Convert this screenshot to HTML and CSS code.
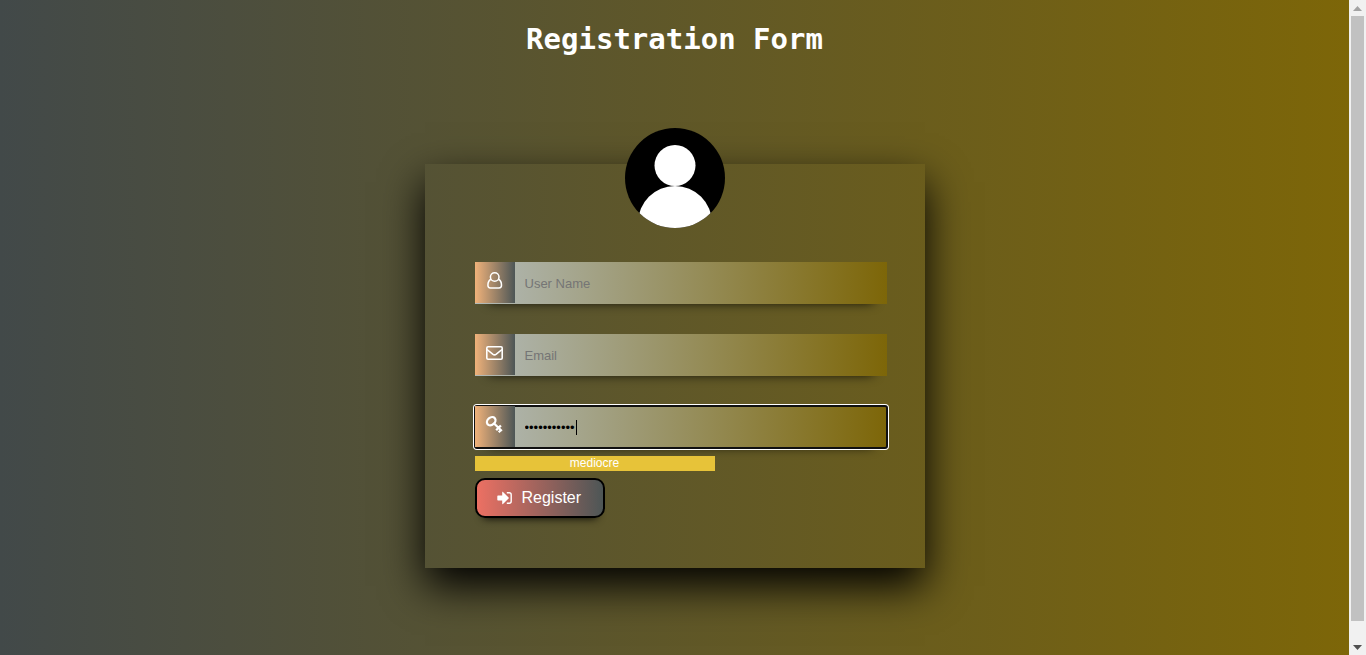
FILE: index.html
```
<!DOCTYPE html>
<html lang="en">
<head>
<meta charset="utf-8">
<title>Registration Form</title>
<link rel="stylesheet" href="styles.css">
</head>
<body>
<main class="page">
  <h1 class="title">Registration Form</h1>
  <form class="card">
    <svg class="avatar" viewBox="0 0 100 100" role="img" aria-label="Avatar">
      <defs><clipPath id="disc"><circle cx="50" cy="50" r="50"/></clipPath></defs>
      <g clip-path="url(#disc)">
        <rect width="100" height="100" fill="#000"/>
        <circle cx="50" cy="37.500" r="20.500" fill="#fff"/>
        <circle cx="50" cy="95" r="37" fill="#fff"/>
      </g>
    </svg>
    <div class="fields">
      <div class="field">
        <label class="icon" for="user" aria-label="User name">
          <svg viewBox="0 0 20 20" fill="none" stroke="#fff" stroke-width="1.500"><circle cx="9.700" cy="6" r="4.300"/><path d="M6 8.300C3.800 9.300 2.900 11.800 2.900 14.300c0 1.700 1 2.700 2.500 2.700h8.600c1.500 0 2.500-1 2.500-2.700 0-2.500-.9-5-3.100-6"/></svg>
        </label>
        <input class="input" id="user" type="text" placeholder="User Name">
      </div>
      <div class="field">
        <label class="icon" for="email" aria-label="Email">
          <svg viewBox="0 0 20 20" fill="none" stroke="#fff" stroke-width="1.600"><rect x="1.800" y="3.800" width="15.400" height="12.400" rx="1.200"/><path d="M2 6.500l5.700 4.700c1.300 1 2.300 1 3.600 0L17 6.500"/></svg>
        </label>
        <input class="input" id="email" type="email" placeholder="Email">
      </div>
      <div class="field">
        <label class="icon" for="password" aria-label="Password">
          <svg viewBox="0 0 20 20" fill="none" stroke="#fff" stroke-width="2.300"><ellipse cx="6.200" cy="6.200" rx="4.700" ry="3.600" transform="rotate(-40 6.200 6.200)"/><path d="M8.800 8.200l8 7.800M13.500 12.700l-2.300 2.500M15.900 15l-2.200 2.300M13.500 12.900l2.400-2.400"/></svg>
        </label>
        <input class="input input-active" id="password" type="password" value="mypassword1">
        <span class="caret"></span>
      </div>
    </div>
    <div class="strength">mediocre</div>
    <button class="register" type="button">
      <svg viewBox="0 0 16 14" fill="#fff"><path d="M1 4.500h4.200V1.300c0-.5.500-.6.800-.3l5.600 5.500c.3.300.3.700 0 1L6 13c-.3.300-.8.200-.8-.3V9.500H1c-.4 0-.7-.3-.7-.7V5.200c0-.4.300-.7.700-.7z"/><path d="M9.800 1.700h2.400c1.200 0 2 .8 2 2v6.600c0 1.200-.8 2-2 2H9.800" fill="none" stroke="#fff" stroke-width="1.400"/></svg>
      <span>Register</span>
    </button>
  </form>
</main>
<div class="scrollbar" aria-hidden="true">
  <svg class="arrow" viewBox="0 0 17 16"><path d="M4 11l4.500-5 4.500 5z" fill="#a3a3a3"/></svg>
  <div class="thumb"></div>
  <svg class="arrow" viewBox="0 0 17 16"><path d="M4 6l4.500 5L13 6z" fill="#505050"/></svg>
</div>
</body>
</html>
```
FILE: styles.css
```
* { box-sizing: border-box; }

body {
  display: grid;
  grid-template-columns: 1fr 17px;
  min-height: 100vh;
  margin: 0;
  font-family: "Liberation Sans", Arial, sans-serif;
}

.page {
  padding: 20px 16px 80px;
  background: linear-gradient(to right, #424949, #7d6608);
}

.title {
  margin: 0 0 106px;
  color: #fff;
  font: bold 29px/38px "DejaVu Sans Mono", monospace;
  text-align: center;
}

.card {
  display: flow-root;
  max-width: 500px;
  margin: 0 auto;
  padding: 0 38px 50px 50px;
  box-shadow: 0 18px 40px #000;
}

.avatar {
  display: block;
  width: 100px;
  height: 100px;
  margin: -36px auto 34px;
  transform: translateX(-6px);
}

.fields {
  display: grid;
  gap: 30px;
}

.field {
  position: relative;
  display: grid;
}

.icon {
  position: absolute;
  z-index: 1;
  top: 0;
  left: 0;
  display: grid;
  place-items: center;
  width: 40px;
  height: 41px;
  padding-bottom: 4px;
  background: linear-gradient(to right, #f0b27a, #4d5656);
}

.icon svg {
  width: 20px;
  height: 20px;
}

.input {
  width: 100%;
  height: 42px;
  padding: 0 10px 0 50px;
  border: 0;
  outline: 0;
  color: #000;
  font: 13px "Liberation Sans", Arial, sans-serif;
  background: linear-gradient(to right, #b2bab8, #7d6608);
  box-shadow: 0 12px 12px -14px #000;
}

.input::placeholder {
  color: #757575;
  opacity: 1;
}

.input-active {
  border-radius: 2px;
  outline: 2px solid #101010;
  outline-offset: -1px;
  box-shadow: 0 0 0 2px #fff, 0 12px 12px -14px #000;
}

.caret {
  position: absolute;
  top: 14px;
  left: 101px;
  width: 1px;
  height: 15px;
  background: #000;
}

.strength {
  position: relative;
  width: 240px;
  margin: 8px 0 7px;
  color: #fff;
  background: #e7c339;
  font-size: 12px;
  line-height: 15px;
  text-align: center;
}

.register {
  display: flex;
  align-items: center;
  gap: 9px;
  height: 40px;
  padding: 0 22px 0 20px;
  border: 2px solid #000;
  border-radius: 10px;
  color: #fff;
  font: 16px "Liberation Sans", Arial, sans-serif;
  background: linear-gradient(to right, #ec7063, #4d5656);
  box-shadow: 0 8px 8px -8px #000;
}

.register svg {
  width: 16px;
  height: 14px;
}

.scrollbar {
  display: grid;
  grid-template-rows: 16px 1fr 16px;
  background: #f1f1f1;
}

.thumb {
  margin: 0 2px 18px;
  background: #c1c1c1;
}

.arrow {
  width: 17px;
  height: 16px;
}
```
